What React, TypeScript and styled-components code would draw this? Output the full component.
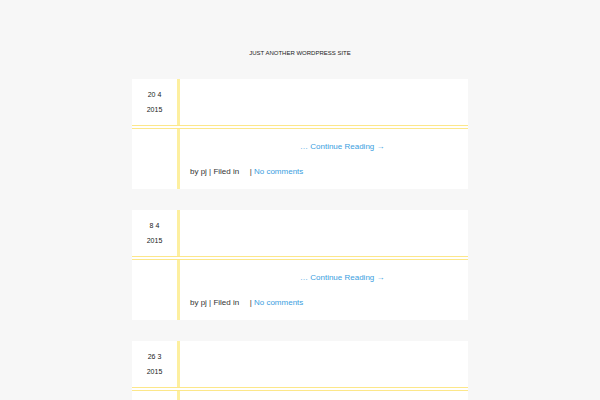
import React from "react";
import styled, { createGlobalStyle } from "styled-components";

interface Post {
   day: number;
   month: number;
   year: number;
}

const posts: Post[] = [
   { day: 20, month: 4, year: 2015 },
   { day: 8, month: 4, year: 2015 },
   { day: 26, month: 3, year: 2015 },
];

const App: React.FC = () => {
   return (
      <>
         <GlobalStyle />
         <Page>
            <Tagline>Just another WordPress site</Tagline>
            <Posts>
               {posts.map((post) => (
                  <Card key={`${post.day}-${post.month}`}>
                     <TopRow>
                        <DateCell>
                           <DateLine>
                              {post.day} {post.month}
                           </DateLine>
                           <DateLine>{post.year}</DateLine>
                        </DateCell>
                        <TitleCell />
                     </TopRow>
                     <BottomRow>
                        <DateCell />
                        <Body>
                           <Excerpt>
                              … <Link href="#">Continue Reading →</Link>
                           </Excerpt>
                           <Meta>
                              by pj | Filed in <Gap /> | <Link href="#">No comments</Link>
                           </Meta>
                        </Body>
                     </BottomRow>
                  </Card>
               ))}
            </Posts>
         </Page>
      </>
   );
};

export default App;

const GlobalStyle = createGlobalStyle`
   body {
      margin: 0;
      background: #f7f7f7;
      font-family: "Liberation Sans", Arial, sans-serif;
      color: #333;
   }
`;

const Page = styled.div`
   display: flex;
   flex-direction: column;
   align-items: center;
   padding-top: 49px;
`;

const Tagline = styled.p`
   margin: 0;
   font-size: 6px;
   line-height: 8px;
   text-transform: uppercase;
   color: #222;
`;

const Posts = styled.div`
   display: flex;
   flex-direction: column;
   gap: 21px;
   margin-top: 22px;
`;

const Card = styled.article`
   width: 336px;
   background: #fff;
   display: flex;
   flex-direction: column;
`;

const TopRow = styled.div`
   display: flex;
   height: 50px;
   border-bottom: 4px double #fce78a;
   box-sizing: border-box;
`;

const BottomRow = styled.div`
   display: flex;
   height: 60px;
`;

const DateCell = styled.div`
   width: 45px;
   flex-shrink: 0;
   border-right: 3px solid #fdef9f;
   display: flex;
   flex-direction: column;
   justify-content: center;
   align-items: center;
`;

const DateLine = styled.span`
   font-size: 7px;
   line-height: 15px;
   color: #222;
`;

const TitleCell = styled.div`
   flex: 1;
`;

const Body = styled.div`
   flex: 1;
   padding: 12px 0 0 10px;
   font-size: 8px;
`;

const Excerpt = styled.p`
   margin: 0 0 0 110px;
   line-height: 11px;
   color: #3a9ee0;
`;

const Meta = styled.p`
   margin: 14px 0 0;
   line-height: 11px;
   color: #333;
`;

const Gap = styled.span`
   display: inline-block;
   width: 6px;
`;

const Link = styled.a`
   color: #3a9ee0;
   text-decoration: none;
`;
